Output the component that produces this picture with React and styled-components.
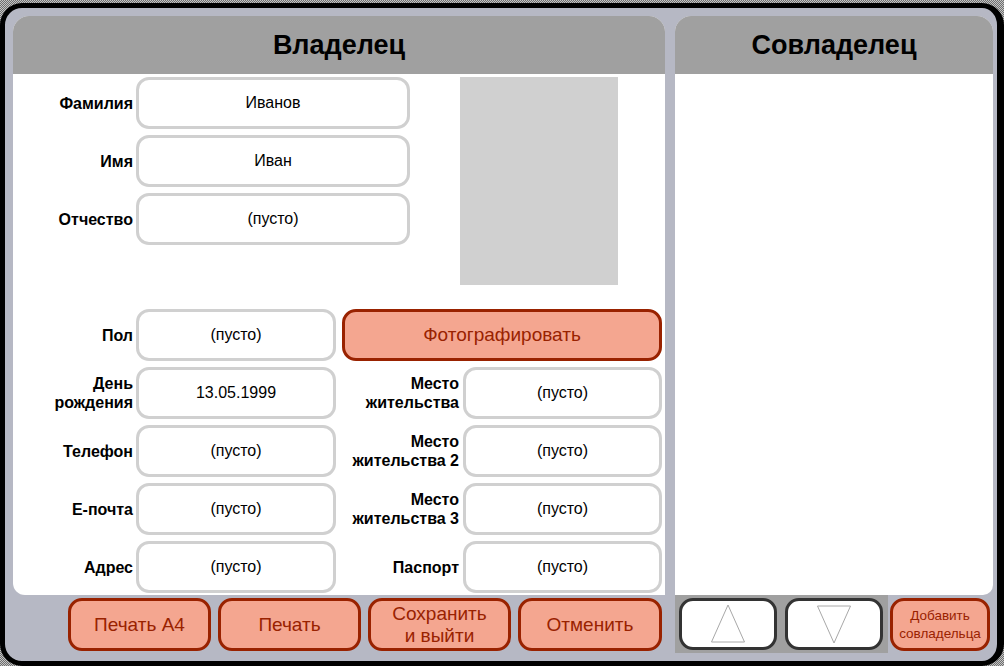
import React from "react";
import styled, { createGlobalStyle } from "styled-components";

const GlobalStyle = createGlobalStyle`
  html, body {
    margin: 0;
    padding: 0;
    width: 1004px;
    height: 666px;
    overflow: hidden;
    background: repeating-conic-gradient(#6f6f6f 0 25%, #c4c4c4 0 50%) 0 0 / 2px 2px;
    font-family: "Liberation Sans", Arial, sans-serif;
  }
  * {
    box-sizing: border-box;
  }
`;

const Desktop = styled.div`
  padding-top: 3px;
  width: 1004px;
  height: 666px;
`;

const Window = styled.div`
  width: 1004px;
  height: 663px;
  border: 5px solid #000;
  border-right-width: 7px;
  border-radius: 22px;
  background: #b6b8c4;
  padding: 8px 4px 8px 8px;
  display: grid;
  grid-template-columns: 652px 318px;
  grid-template-rows: 579px 58px;
  column-gap: 10px;
`;

const Panel = styled.section`
  display: flex;
  flex-direction: column;
  background: #fff;
  border-radius: 16px 16px ${(p) => (p.$side === "left" ? "0 12px" : "10px 0")};
  overflow: hidden;
`;

const Header = styled.h1`
  margin: 0;
  height: 58px;
  flex: none;
  background: #a0a0a0;
  display: flex;
  align-items: center;
  justify-content: center;
  font-size: 27px;
  font-weight: bold;
  color: #000;
`;

const Body = styled.div`
  flex: 1;
  padding: 3px 3px 0 0;
`;

const TopSection = styled.div`
  display: flex;
  height: 208px;
  margin-bottom: 24px;
`;

const TopFields = styled.div`
  display: grid;
  grid-template-columns: 120px 274px;
  grid-auto-rows: 52px;
  column-gap: 3px;
  row-gap: 6px;
  align-content: start;
`;

const Photo = styled.div`
  width: 158px;
  height: 208px;
  margin-left: 50px;
  background: #d0d0d0;
`;

const LowerGrid = styled.div`
  display: grid;
  grid-template-columns: 120px 200px 121px 199px;
  grid-auto-rows: 52px;
  column-gap: 3px;
  row-gap: 6px;
`;

const Label = styled.div`
  display: flex;
  align-items: center;
  justify-content: flex-end;
  text-align: right;
  font-size: 16px;
  font-weight: bold;
  line-height: 19px;
  color: #000;
  padding-right: ${(p) => (p.$right ? "1px" : "0")};
`;

const Field = styled.div`
  display: flex;
  align-items: center;
  justify-content: center;
  border: 3px solid #d0d0d0;
  border-radius: 13px;
  background: #fff;
  font-size: 16px;
  color: #000;
`;

const ActionButton = styled.button`
  margin: 0;
  padding: 0;
  border: 3px solid #992200;
  border-radius: 14px;
  background: #f4a690;
  color: #992200;
  font-family: "Liberation Sans", Arial, sans-serif;
  font-size: ${(p) => p.$size || 19}px;
  line-height: ${(p) => (p.$size ? 18 : 22)}px;
  cursor: pointer;
`;

const PhotoButton = styled(ActionButton)`
  grid-column: 3 / span 2;
  margin-left: 3px;
`;

const ButtonRow = styled.div`
  display: flex;
  justify-content: flex-end;
  gap: 7px;
  padding: 3px 3px 2px 0;
`;

const BottomButton = styled(ActionButton)`
  width: ${(p) => p.$w || 143}px;
  height: 53px;
`;

const RightBottom = styled.div`
  display: flex;
  align-items: flex-start;
`;

const ArrowStrip = styled.div`
  display: flex;
  gap: 8px;
  background: #a0a0a0;
  height: 58px;
  padding: 3px 5px 0 4px;
`;

const ArrowButton = styled.button`
  width: 98px;
  height: 52px;
  margin: 0;
  padding: 0;
  border: 3px solid #333;
  border-radius: 14px;
  background: #fff;
  display: flex;
  align-items: center;
  justify-content: center;
  cursor: pointer;
`;

const AddButton = styled(ActionButton)`
  width: 100px;
  height: 53px;
  margin: 3px 0 0 2px;
`;

const Triangle = ({ down }) => (
  <svg width="36" height="42" viewBox="0 0 36 42">
    <polygon
      points={down ? "1.5,3 34.5,3 18,40" : "18,2 34.5,39 1.5,39"}
      fill="none"
      stroke="#a8a8a8"
      strokeWidth="1"
    />
  </svg>
);

const topFields = [
  ["Фамилия", "Иванов"],
  ["Имя", "Иван"],
  ["Отчество", "(пусто)"],
];

const lowerRows = [
  [["День", "рождения"], "13.05.1999", ["Место", "жительства"], "(пусто)"],
  [["Телефон"], "(пусто)", ["Место", "жительства 2"], "(пусто)"],
  [["Е-почта"], "(пусто)", ["Место", "жительства 3"], "(пусто)"],
  [["Адрес"], "(пусто)", ["Паспорт"], "(пусто)"],
];

const lines = (arr) =>
  arr.map((l, i) => (
    <React.Fragment key={i}>
      {i > 0 && <br />}
      {l}
    </React.Fragment>
  ));

export default function App() {
  return (
    <Desktop>
      <GlobalStyle />
      <Window>
        <Panel $side="left">
          <Header>Владелец</Header>
          <Body>
            <TopSection>
              <TopFields>
                {topFields.map(([label, value]) => (
                  <React.Fragment key={label}>
                    <Label>{label}</Label>
                    <Field>{value}</Field>
                  </React.Fragment>
                ))}
              </TopFields>
              <Photo />
            </TopSection>
            <LowerGrid>
              <Label>Пол</Label>
              <Field>(пусто)</Field>
              <PhotoButton>Фотографировать</PhotoButton>
              {lowerRows.map(([l1, v1, l2, v2], i) => (
                <React.Fragment key={i}>
                  <Label>
                    <span>{lines(l1)}</span>
                  </Label>
                  <Field>{v1}</Field>
                  <Label $right>
                    <span>{lines(l2)}</span>
                  </Label>
                  <Field>{v2}</Field>
                </React.Fragment>
              ))}
            </LowerGrid>
          </Body>
        </Panel>
        <Panel $side="right">
          <Header>Совладелец</Header>
        </Panel>
        <ButtonRow>
          <BottomButton>Печать А4</BottomButton>
          <BottomButton>Печать</BottomButton>
          <BottomButton>
            Сохранить
            <br />
            и выйти
          </BottomButton>
          <BottomButton $w={144}>Отменить</BottomButton>
        </ButtonRow>
        <RightBottom>
          <ArrowStrip>
            <ArrowButton aria-label="вверх">
              <Triangle />
            </ArrowButton>
            <ArrowButton aria-label="вниз">
              <Triangle down />
            </ArrowButton>
          </ArrowStrip>
          <AddButton $size={13.5}>
            Добавить
            <br />
            совладельца
          </AddButton>
        </RightBottom>
      </Window>
    </Desktop>
  );
}
